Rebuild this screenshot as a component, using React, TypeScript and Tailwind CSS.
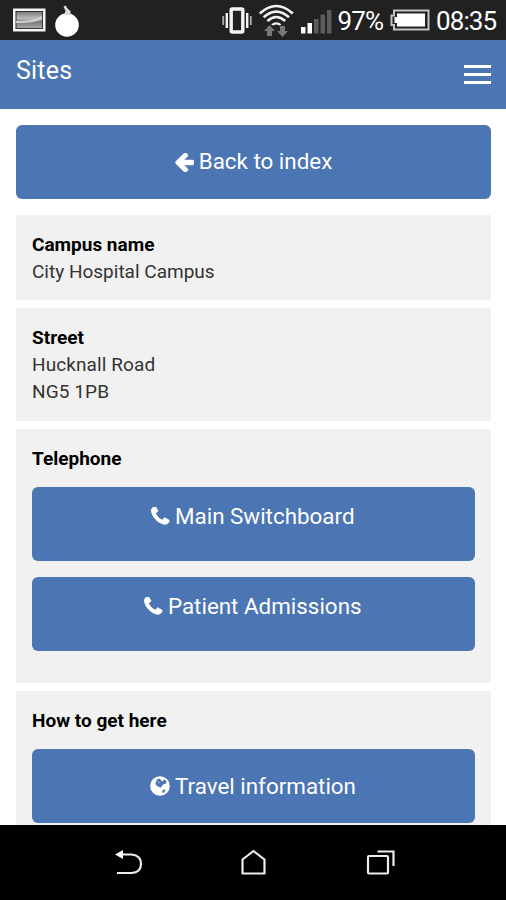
import type { ReactNode } from "react";

function ArrowLeftIcon() {
  return (
    <svg
      viewBox="64 160 1600 1472"
      className="mr-[5px] h-[19px] w-5 shrink-0"
      fill="currentColor"
      stroke="currentColor"
      strokeWidth="50"
    >
      <path d="M1664 896v128q0 53-32.5 90.5t-84.5 37.5h-704l293 294q38 36 38 90t-38 90l-75 76q-37 37-90 37-52 0-91-37l-651-652q-37-37-37-90 0-52 37-91l651-650q38-38 91-38 52 0 90 38l75 74q38 38 38 91t-38 91l-293 293h704q52 0 84.5 37.5t32.5 90.5z" transform="translate(0 -64)" />
    </svg>
  );
}

function PhoneIcon() {
  return (
    <svg
      viewBox="152 152 1488 1488"
      className="mr-[5px] mb-px size-[18.5px] shrink-0"
      fill="currentColor"
      stroke="currentColor"
      strokeWidth="80"
    >
      <path d="M1600 1240q0 27-10 70.5t-21 68.5q-21 50-122 106-94 51-186 51-27 0-53-3.5t-57.5-12.5-47-14.5-55.5-20.5-49-18q-98-35-175-83-127-79-264-216t-216-264q-48-77-83-175-3-9-18-49t-20.5-55.5-14.5-47-12.5-57.5-3.5-53q0-92 51-186 56-101 106-122 25-11 68.5-21t70.5-10q14 0 21 3 18 6 53 76 11 19 30 54t35 63.5 31 53.5q3 4 17.5 25t21.5 35.5 7 28.5q0 20-28.5 50t-62 55-62 53-28.5 46q0 9 5 22.5t8.5 20.5 14 24 11.5 19q76 137 174 235t235 174q2 1 19 11.5t24 14 20.5 8.5 22.5 5q18 0 46-28.5t53-62 55-62 50-28.5q14 0 28.5 7t35.5 21.5 25 17.5q25 15 53.5 31t63.5 35 54 30q70 35 76 53 3 7 3 21z" />
    </svg>
  );
}

function GlobeIcon() {
  return (
    <svg viewBox="0 0 20 20" className="mr-[5px] size-5 shrink-0">
      <circle cx="10" cy="10" r="9.8" fill="#fff" />
      <path
        d="M7 3.4l2.2-1 1.6 1.4 1.4 1.6 1.8-1.6 1.8.4.8 2-1 1.6-1.8.2-1.6 1.6-1 1.8-1.4.2-1.4-1.2-1.8-.6-1.2-2.2L6 6z"
        fill="#4c75b3"
      />
      <path d="M8 5.4l1.6.6-.6 1.4z" fill="#fff" />
      <path d="M12.8 13.8l2-.4.6 1.2-1.4 2-1.6.2-.2-1.4z" fill="#4c75b3" />
    </svg>
  );
}

function StatusBar() {
  return (
    <div className="flex h-10 shrink-0 items-center bg-[#212121] text-white">
      <svg viewBox="0 0 90 40" className="h-10 w-[90px] shrink-0">
        <defs>
          <linearGradient id="photo" x1="0" y1="0" x2="0" y2="1">
            <stop offset="0" stopColor="#777" />
            <stop offset=".4" stopColor="#bbb" />
            <stop offset=".6" stopColor="#777" />
            <stop offset="1" stopColor="#aaa" />
          </linearGradient>
        </defs>
        <rect x="13" y="8.5" width="32.5" height="23" fill="#f5f5f5" />
        <rect x="16" y="11.5" width="26.5" height="17" fill="url(#photo)" stroke="#333" />
        <path d="M16 21c8 0 18-1 26-5v3c-7 4-17 4-26 4z" fill="#ccc" />
        <circle cx="67" cy="25" r="11.8" fill="#fff" />
        <path d="M64 15l1.5-4L63.5 6.5l2-1 2.5 3.5 2.5 2v4z" fill="#ddd" />
      </svg>
      <svg viewBox="0 0 114 40" className="ml-[130px] h-10 w-[114px] shrink-0">
        <g fill="none" stroke="#f2f2f2">
          <rect x="11.2" y="9" width="11.6" height="23" rx="1" strokeWidth="3.4" />
          <path d="M6.8 13v15M27.2 13v15" strokeWidth="2.4" />
          <path d="M3.2 16v9M30.8 16v9" strokeWidth="1.8" stroke="#aaa" />
          <path d="M39.8 13.5q16.5-15 33 0M43.6 17.3q12.7-11.5 25.4 0M47.4 21q8.9-8 17.8 0" strokeWidth="2.6" />
        </g>
        <path d="M51 24.5q5.3-4.6 10.6 0l-2.4 1q-2.9-2-5.8 0z" fill="#f2f2f2" />
        <path d="M49.5 25l5.500 6h-3v5h-5v-5h-3zM62.5 37 57 31h3v-5h5v5h3z" fill="#777" />
        <path d="M81 27h4.5v6.5H81zM87.5 23H92v10.5h-4.5z" fill="#fff" />
        <path d="M94 19h4.5v14.5H94zM100.5 14.5h4.5v19h-4.5zM107 10h4.5v23.5H107z" fill="#5c5c5c" />
      </svg>
      <span className="ml-[3.5px] w-[49px] pt-0.5 text-[26px] tracking-[-0.8px] whitespace-nowrap">97%</span>
      <svg viewBox="0 0 40 24" className="ml-[3.5px] h-6 w-10 shrink-0">
        <path
          d="M4 2.5h34.5v19H4V17H1.5V7.5H4z"
          fill="#212121"
          stroke="#c4c4c4"
          strokeWidth="2"
        />
        <path d="M7 5.5h28v13H7V15H4.5V9H7z" fill="#fff" />
      </svg>
      <span className="ml-[6px] pt-0.5 text-[26px] tracking-[-0.9px] whitespace-nowrap">08:35</span>
    </div>
  );
}

function Header() {
  return (
    <header className="flex h-[69px] shrink-0 items-start justify-between bg-[#4c75b3] px-4 text-white">
      <h1 className="pt-3 text-[25px] leading-[38px] tracking-[0.2px]">Sites</h1>
      <button type="button" aria-label="Menu" className="mt-[25px] -mr-px flex w-[27px] flex-col gap-[5px]">
        <span className="h-[3px] bg-white" />
        <span className="h-[3px] bg-white" />
        <span className="h-[3px] bg-white" />
      </button>
    </header>
  );
}

type ActionProps = {
  icon: ReactNode;
  label: string;
  raised?: boolean;
};

function ActionButton({ icon, label, raised }: ActionProps) {
  return (
    <button
      type="button"
      className={`flex h-[74px] w-full shrink-0 items-center justify-center rounded-md bg-[#4c75b3] text-[22.4px] text-white ${
        raised ? "pb-[15px]" : ""
      }`}
    >
      {icon}
      <span>{label}</span>
    </button>
  );
}

type PanelProps = {
  title: string;
  className: string;
  children: ReactNode;
};

function Panel({ title, className, children }: PanelProps) {
  return (
    <section className={`shrink-0 bg-[#f1f1f1] px-4 pt-4 text-[19px] leading-[27px] text-[#333] ${className}`}>
      <h2 className="pl-[0.5px] font-bold text-black">{title}</h2>
      {children}
    </section>
  );
}

function NavBar() {
  return (
    <nav className="flex h-[75px] shrink-0 items-center justify-center bg-black">
      <svg viewBox="0 0 300 40" className="h-10 w-[300px]" fill="none" stroke="#eee" strokeWidth="2.2">
        <path d="M19 11.5h9.5q9.500 1 9.500 9.500t-9.500 9H14" />
        <path d="M12 11.5 20 7v9z" fill="#fff" stroke="none" />
        <path d="M139.5 16.5 150.5 8l11 8.5v14h-22z" strokeLinejoin="round" />
        <rect x="265" y="13" width="20" height="17.5" rx="1" />
        <path d="M274.5 8.5h16V23" />
      </svg>
    </nav>
  );
}

export default function App() {
  return (
    <div className="flex h-[900px] w-[506px] flex-col overflow-hidden bg-white font-['Roboto',sans-serif]">
      <StatusBar />
      <Header />
      <main className="flex min-h-0 flex-1 flex-col overflow-hidden px-[15.5px] pt-4">
        <ActionButton icon={<ArrowLeftIcon />} label="Back to index" />
        <div className="mt-4 flex flex-col gap-2">
          <Panel title="Campus name" className="h-[85px]">
            <p className="pl-[0.5px]">City Hospital Campus</p>
          </Panel>
          <Panel title="Street" className="h-[113px]">
            <p className="pl-[0.5px] tracking-[0.1px]">Hucknall Road</p>
            <p className="pl-[0.5px] tracking-[0.1px]">NG5 1PB</p>
          </Panel>
          <Panel title="Telephone" className="h-[254px]">
            <div className="mt-[15px] flex flex-col gap-4">
              <ActionButton icon={<PhoneIcon />} label="Main Switchboard" raised />
              <ActionButton icon={<PhoneIcon />} label="Patient Admissions" raised />
            </div>
          </Panel>
          <Panel title="How to get here" className="h-[150px]">
            <div className="mt-[15px]">
              <ActionButton icon={<GlobeIcon />} label="Travel information" />
            </div>
          </Panel>
        </div>
      </main>
      <NavBar />
    </div>
  );
}
